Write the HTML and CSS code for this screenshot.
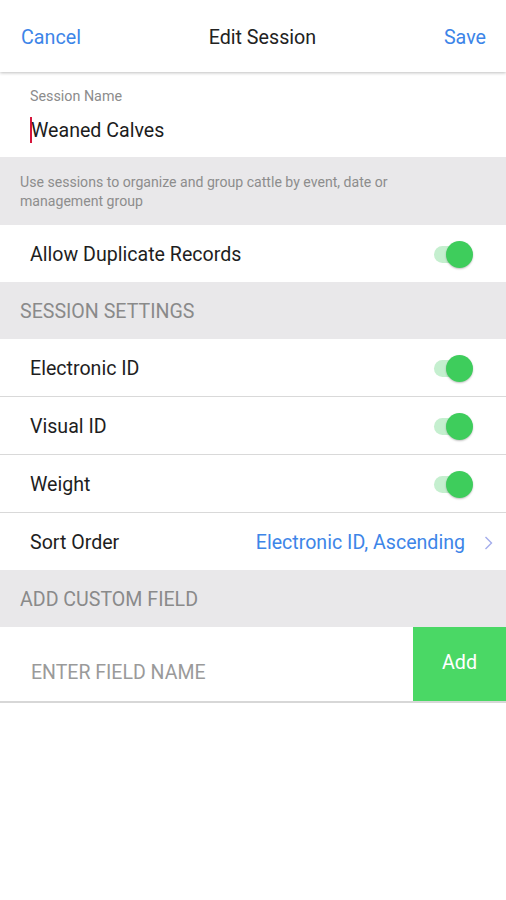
FILE: index.html
```html
<!DOCTYPE html>
<html lang="en">
<head>
    <meta charset="UTF-8">
    <meta name="viewport" content="width=device-width, initial-scale=1.0">
    <title>Edit Session</title>
    <link rel="stylesheet" href="styles.css">
</head>
<body>
    <header class="topbar">
        <span class="nav-btn">Cancel</span>
        <h1>Edit Session</h1>
        <span class="nav-btn">Save</span>
    </header>

    <div class="name-field">
        <label>Session Name</label>
        <div class="name-value"><span class="caret"></span>Weaned Calves</div>
    </div>

    <div class="hint">Use sessions to organize and group cattle by event, date or management group</div>

    <div class="row">
        <span>Allow Duplicate Records</span>
        <span class="toggle"><span class="knob"></span></span>
    </div>

    <div class="section">SESSION SETTINGS</div>

    <div class="row bordered">
        <span>Electronic ID</span>
        <span class="toggle"><span class="knob"></span></span>
    </div>
    <div class="row bordered">
        <span>Visual ID</span>
        <span class="toggle"><span class="knob"></span></span>
    </div>
    <div class="row bordered">
        <span>Weight</span>
        <span class="toggle"><span class="knob"></span></span>
    </div>
    <div class="row">
        <span>Sort Order</span>
        <span class="sort-value">Electronic ID, Ascending
            <svg class="chevron" width="9" height="14" viewBox="0 0 9 14"><path d="M1.5 1 L7.5 7 L1.5 13" fill="none" stroke="#a3acec" stroke-width="1.4"/></svg>
        </span>
    </div>

    <div class="section">ADD CUSTOM FIELD</div>

    <div class="custom-field">
        <span class="placeholder">ENTER FIELD NAME</span>
        <span class="add-btn">Add</span>
    </div>
</body>
</html>
```

FILE: styles.css
```css
body {
    margin: 0;
    font-family: Roboto, "Noto Sans", sans-serif;
    background: #fff;
    color: #222;
}

.topbar {
    height: 72px;
    display: flex;
    align-items: center;
    justify-content: space-between;
    padding: 2px 20px 0 21px;
    box-sizing: border-box;
    box-shadow: 0 1px 3px rgba(0, 0, 0, 0.25);
    position: relative;
}

.topbar h1 {
    margin: 0;
    font-size: 19.7px;
    font-weight: normal;
    color: #222;
}

.nav-btn {
    color: #3d85e8;
    font-size: 19.7px;
}

.name-field {
    height: 85px;
    box-sizing: border-box;
    padding: 16px 30px 0;
}

.name-field label {
    display: block;
    font-size: 14.3px;
    color: #8c8c8c;
}

.name-value {
    margin-top: 13px;
    font-size: 19.6px;
    color: #1c1c1c;
    display: flex;
    align-items: center;
}

.caret {
    width: 2px;
    height: 26px;
    background: #d6163c;
    margin-right: -1px;
}

.hint {
    background: #e9e8ea;
    height: 68px;
    box-sizing: border-box;
    padding: 16px 80px 0 20px;
    font-size: 14.1px;
    line-height: 18.5px;
    color: #8d8d8d;
}

.row {
    height: 57px;
    display: flex;
    align-items: center;
    justify-content: space-between;
    padding: 2px 38px 0 30px;
    box-sizing: border-box;
    font-size: 19.6px;
    color: #1e1e1e;
}

.row.bordered {
    height: 58px;
    border-bottom: 1px solid #d9d9d9;
}

.section {
    background: #e9e8ea;
    height: 57px;
    display: flex;
    align-items: center;
    padding: 2px 20px 0;
    box-sizing: border-box;
    font-size: 19.6px;
    color: #8a8a8a;
}

.toggle {
    position: relative;
    width: 34px;
    height: 17px;
    border-radius: 9px;
    background: #c5efcf;
}

.knob {
    position: absolute;
    right: -5px;
    top: -5px;
    width: 27px;
    height: 27px;
    border-radius: 50%;
    background: #3ecd5c;
    box-shadow: 0 1px 2px rgba(0, 0, 0, 0.25);
}

.sort-value {
    color: #3d85e8;
    display: flex;
    align-items: center;
    gap: 19px;
    margin-right: -25px;
}

.custom-field {
    height: 76px;
    display: flex;
    align-items: stretch;
    justify-content: space-between;
    border-bottom: 2px solid #d7d7d7;
    box-sizing: border-box;
}

.placeholder {
    align-self: center;
    margin: 16px 0 0 31px;
    font-size: 19.5px;
    color: #9a9a9a;
}

.add-btn {
    width: 93px;
    background: #4ad865;
    color: #fff;
    font-size: 19.7px;
    display: flex;
    align-items: center;
    justify-content: center;
    padding-bottom: 3px;
    box-sizing: border-box;
}
```
